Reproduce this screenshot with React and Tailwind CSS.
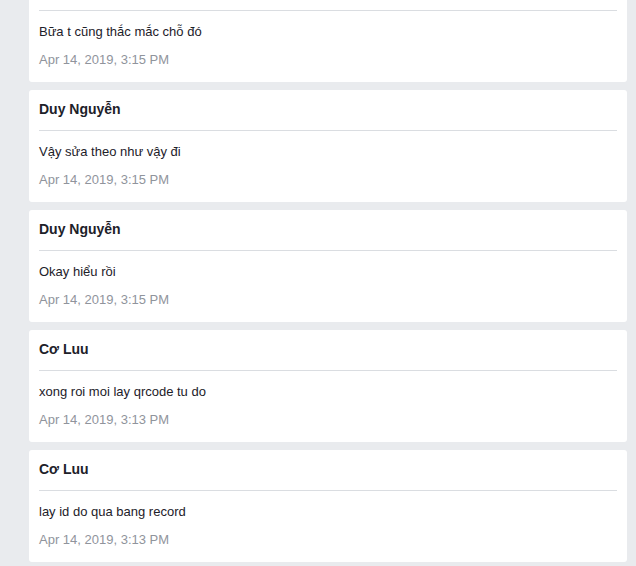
export default function App() {
  const items = [
    { name: "", msg: "Bữa t cũng thắc mắc chỗ đó", date: "Apr 14, 2019, 3:15 PM" },
    { name: "Duy Nguyễn", msg: "Vậy sửa theo như vậy đi", date: "Apr 14, 2019, 3:15 PM" },
    { name: "Duy Nguyễn", msg: "Okay hiểu rồi", date: "Apr 14, 2019, 3:15 PM" },
    { name: "Cơ Luu", msg: "xong roi moi lay qrcode tu do", date: "Apr 14, 2019, 3:13 PM" },
    { name: "Cơ Luu", msg: "lay id do qua bang record", date: "Apr 14, 2019, 3:13 PM" },
  ];
  return (
    <div
      className="h-[566px] w-[636px] overflow-hidden bg-[#e9ebee] text-[#1d2129]"
      style={{ fontFamily: '"Liberation Sans", Arial, sans-serif' }}
    >
      <div className="ml-[29px] mr-[9px] -mt-[30px] flex flex-col gap-[8px]">
        {items.map((it, i) => (
          <div key={i} className="h-[112px] rounded-[3px] bg-white px-[10px] pt-[10px]">
            <div className="h-[18px] text-[14px] leading-[18px] font-bold">{it.name}</div>
            <div className="mt-[12px] h-px bg-[#dadde1]" />
            <div className="mt-[12px] text-[13px] leading-[18px]">{it.msg}</div>
            <div className="mt-[10px] text-[13px] leading-[18px] text-[#90949c]">{it.date}</div>
          </div>
        ))}
      </div>
    </div>
  );
}
